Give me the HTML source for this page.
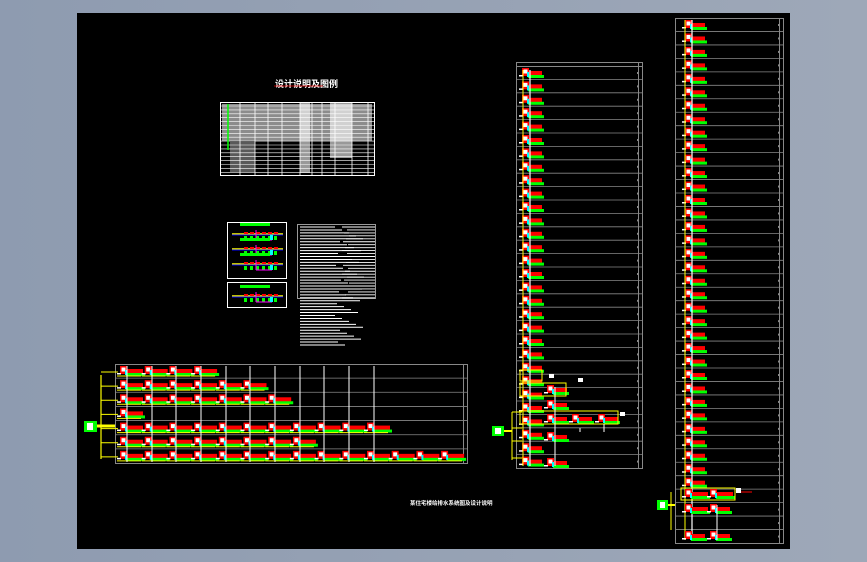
<!DOCTYPE html>
<html><head><meta charset="utf-8"><style>
html,body{margin:0;padding:0;width:867px;height:562px;overflow:hidden;background:linear-gradient(90deg,#8e9bb0,#9ea8b8);}
svg{position:absolute;left:0;top:0}
</style></head><body>
<svg id="s" width="867" height="562" xmlns="http://www.w3.org/2000/svg" font-family="Liberation Sans, Noto Sans CJK SC, sans-serif">
<rect x="77" y="13" width="713" height="536" fill="#000"/>
<text x="275" y="87" fill="#fff" font-size="9" font-weight="bold">设计说明及图例</text>
<line x1="274" y1="86" x2="323" y2="86" stroke="#e00" stroke-width="0.7"/>
<rect x="220.5" y="102.5" width="154" height="73" fill="none" stroke="#fff" stroke-width="1"/>
<g id="tbl"></g>
<rect x="227.5" y="222.5" width="59" height="56" fill="none" stroke="#fff"/>
<rect x="227.5" y="282.5" width="59" height="25" fill="none" stroke="#fff"/>
<g id="mini"></g>
<rect x="297.5" y="224.5" width="78" height="74" fill="none" stroke="#fff" stroke-width="0.6"/>
<g id="txt"></g>
<text x="410" y="505" fill="#fff" font-size="5.5" font-weight="bold">某住宅楼给排水系统图及设计说明</text>
<g id="g"></g>
</svg>
<script>
var g=document.getElementById('g'),NS='http://www.w3.org/2000/svg';
function el(t,a,p){var e=document.createElementNS(NS,t);for(var k in a)e.setAttribute(k,a[k]);(p||g).appendChild(e);return e;}
function R(x,y,w,h,f,p){el('rect',{x:x,y:y,width:w,height:h,fill:f},p);}
function L(x1,y1,x2,y2,c,w,p){el('line',{x1:x1,y1:y1,x2:x2,y2:y2,stroke:c,'stroke-width':w||1},p);}
function unit(x,y,long){
  R(x,y+1,7,8,'#f00');R(x+1.5,y+2.5,4,4,'#fff');
  var w=long?17:14;
  R(x+6,y+4,w,5,'#f00');R(x+6,y+8,w+2,3,'#0f0');
  R(x+5,y+5,2,5,'#0ff');R(x-3,y+8,4,1.5,'#fff');
}
var t=document.getElementById('tbl');
R(222,104,150,37,'rgba(255,255,255,0.55)',t);
for(var i=0;i<18;i++)L(221,106+i*3.9,374,106+i*3.9,'#fff',0.6,t);
[240,255,268,282,300,312,322,335,352,368].forEach(function(x){L(x,102,x,175,'#fff',0.8,t)});
L(228,104,228,150,'#0f0',1.5,t);
R(300,103,10,70,'rgba(255,255,255,0.6)',t);R(330,103,22,55,'rgba(255,255,255,0.6)',t);R(230,142,25,30,'rgba(255,255,255,0.35)',t);
var tx=document.getElementById('txt');
for(var i=0;i<41;i++){var y=227+i*2.95,w=35+((i*37)%30);L(300,y,300+w,y,'#fff',1,tx);if(i<25)L(342+((i*13)%8),y,375,y,'#fff',0.9,tx);}
var m=document.getElementById('mini');
[230,245,260,292].forEach(function(y,k){R(240,y-7,30,3,'#0f0',m);L(232,y+4,283,y+4,'#ff0',1.5,m);L(232,y+5,283,y+5,'#00f',1,m);
 for(var j=0;j<6;j++){R(244+j*6,y+2,4,2,'#f00',m);R(244+j*6,y+6,3,4,'#0f0',m);}
 L(256,y,256,y+10,'#f0f',1,m);L(256,y+10,272,y+10,'#f0f',1,m);R(270,y+5,3,5,'#0ff',m);});
(function(){var x0=516,x1=642,top=62,bot=468;
 el('rect',{x:x0+.5,y:top+.5,width:x1-x0,height:bot-top,fill:'none',stroke:'#888'});
 L(x0,66.5,x1,66.5,'#888');L(638.5,top,638.5,bot,'#888');
 var n=30,h=(bot-66)/n;
 for(var i=0;i<n;i++){var y=66+i*h;if(i)L(x0,y,x1,y,'#888',0.8);unit(522,y+1);R(637,y+6,2,2,'#888');}
 L(523,70,523,466,'#ff0',1);L(530,70,530,466,'#fff',1.2);
 L(512,412,512,460,'#ff0',1);
 [412,428,441,458].forEach(function(y){L(512,y,522,y,'#ff0',1)});
 R(492,426,12,10,'#0f0');R(495,428,6,6,'#fff');L(504,431,512,431,'#ff0',2);
 unit(547,384);unit(547,399);unit(547,413);unit(572,413);unit(598,413);unit(547,431);unit(547,457);
 el('rect',{x:520,y:370,width:22,height:11,fill:'none',stroke:'#ff0'},g);
 el('rect',{x:520,y:383,width:46,height:13,fill:'none',stroke:'#ff0'},g);
 el('rect',{x:520,y:411,width:98,height:13,fill:'none',stroke:'#ff0'},g);
 L(555,387,555,466,'#fff',1);R(549,374,5,4,'#fff');R(578,378,5,4,'#fff');R(620,412,5,4,'#fff');
 L(580,428,580,432,'#fff');L(604,424,604,432,'#fff');
})();
(function(){var x0=675,x1=783,top=18,bot=543;
 el('rect',{x:x0+.5,y:top+.5,width:x1-x0,height:bot-top,fill:'none',stroke:'#888'});
 L(779.5,top,779.5,bot,'#888');
 var n=39,h=(bot-top)/n;
 for(var i=0;i<n;i++){var y=top+i*h;if(i)L(x0,y,x1,y,'#888',0.8);if(i<35)unit(685,y+1);R(778,y+6,2,2,'#888');}
 L(685,20,685,540,'#ff0',1);L(692,20,692,540,'#fff',1.2);
 R(657,500,11,10,'#0f0');R(660,502,5,6,'#fff');L(668,505,675,505,'#ff0',2);
 L(671,492,671,530,'#ff0',1);
 unit(685,488,1);unit(710,488,1);unit(685,503,1);unit(710,503);unit(685,530);unit(710,530);
 el('rect',{x:681,y:488,width:54,height:12,fill:'none',stroke:'#ff0'},g);R(736,488,5,5,'#fff');L(741,492,752,492,'#f00');
 L(717,505,717,540,'#fff');
})();
(function(){var x0=115,x1=467,top=364,bot=463;
 el('rect',{x:x0+.5,y:top+.5,width:x1-x0,height:bot-top,fill:'none',stroke:'#888'});
 L(463.5,top,463.5,bot,'#888');
 var h=(bot-top)/7,cnt=[4,6,7,1,11,8,14];
 R(84,421,13,11,'#0f0');R(87,423,6,7,'#fff');L(97,426,115,426,'#ff0',3);
 L(101,375,101,459,'#ff0',1.2);
 for(var i=0;i<7;i++){var y=top+i*h;if(i)L(x0,y,x1,y,'#888',0.8);
  L(101,y+8,118,y+8,'#ff0');
  for(var j=0;j<cnt[i];j++){var x=120+j*24.7;unit(x,y+1,1);L(x-3,y+12,x+21,y+12,'#ff0',1);}
 }
 [127,152,176,201,226,250,275,300,324,349,374].forEach(function(x){L(x,366,x,462,'#fff',1)});
})();
</script>
</body></html>
